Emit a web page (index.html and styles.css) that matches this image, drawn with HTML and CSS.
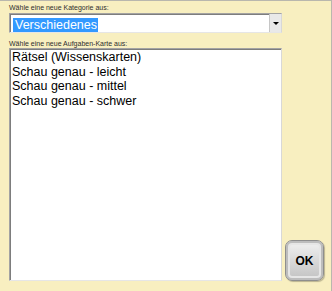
FILE: index.html
```html
<!DOCTYPE html>
<html lang="de">
<head>
    <meta charset="UTF-8">
    <title>Karte wählen</title>
    <link rel="stylesheet" href="styles.css">
</head>
<body>
    <div id="dialog">
        <div class="main">
            <div class="label">Wähle eine neue Kategorie aus:</div>
            <div class="combo">
                <div class="combo-value"><span class="selected">Verschiedenes</span></div>
                <div class="combo-arrow"><span class="triangle"></span></div>
            </div>

            <div class="label second">Wähle eine neue Aufgaben-Karte aus:</div>
            <div class="listbox">
                <div class="item">Rätsel (Wissenskarten)</div>
                <div class="item">Schau genau - leicht</div>
                <div class="item">Schau genau - mittel</div>
                <div class="item">Schau genau - schwer</div>
            </div>
        </div>
        <div class="side">
            <button class="ok-button">OK</button>
        </div>
    </div>
</body>
</html>
```
FILE: styles.css
```css
html, body {
    margin: 0;
    height: 100%;
}

body {
    font-family: 'Liberation Sans', Arial, sans-serif;
    background-color: #f8efc0;
    border-top: 1px solid #b9b7ad;
    border-right: 1px solid #b9b7ad;
    box-sizing: border-box;
}

#dialog {
    display: flex;
    gap: 3px;
    padding: 3px 7px 10px 9px;
    height: 100%;
    box-sizing: border-box;
}

.main {
    width: 273px;
    display: flex;
    flex-direction: column;
}

.label {
    font-size: 7px;
    line-height: 8px;
    color: #2e2e2e;
    height: 9px;
}

.label.second {
    margin-top: 7px;
    height: 8px;
}

/* dropdown field */
.combo {
    display: flex;
    height: 20px;
    box-sizing: border-box;
    background-color: #fff;
    border: 1px solid #a3a3a3;
    border-right-color: #d8d8d8;
    border-bottom-color: #e6e6e6;
    box-shadow: inset 1px 1px 0 #7d7d7d;
}

.combo-value {
    flex: 1;
    padding: 1px 0 0 3px;
}

.selected {
    display: inline-block;
    background-color: #3399ff;
    color: #fff;
    font-size: 12.5px;
    line-height: 14px;
    padding: 0 1px 0 2px;
}

.combo-arrow {
    width: 11px;
    background-color: #e9e9e9;
    border-left: 1px solid #c6c6c6;
    display: flex;
    align-items: center;
    justify-content: center;
}

.triangle {
    width: 0;
    height: 0;
    border-left: 3px solid transparent;
    border-right: 3px solid transparent;
    border-top: 3px solid #000;
    margin-top: 1px;
}

/* list of cards */
.listbox {
    flex: 1;
    background-color: #fff;
    border: 1px solid #a3a3a3;
    border-right-color: #d8d8d8;
    border-bottom-color: #e6e6e6;
    box-shadow: inset 1px 1px 0 #7d7d7d;
    padding: 1px 2px;
}

.item {
    font-size: 12.5px;
    line-height: 14.5px;
    color: #000;
    white-space: nowrap;
}

.side {
    flex: 1;
    display: flex;
    flex-direction: column;
    justify-content: flex-end;
}

.ok-button {
    width: 39px;
    height: 41px;
    margin-bottom: 0;
    font-family: 'Liberation Sans', Arial, sans-serif;
    font-weight: bold;
    font-size: 12px;
    color: #000;
    border: 1px solid #8e8e8e;
    border-radius: 7px;
    background: linear-gradient(#f2f2f2, #d9d9d9 50%, #c2c2c2);
    box-shadow: inset 0 0 0 2px #bdbdbd, inset 0 0 0 4px #e6e6e6, 1px 1px 1px rgba(0, 0, 0, 0.25);
    padding: 0;
    cursor: pointer;
}
```
